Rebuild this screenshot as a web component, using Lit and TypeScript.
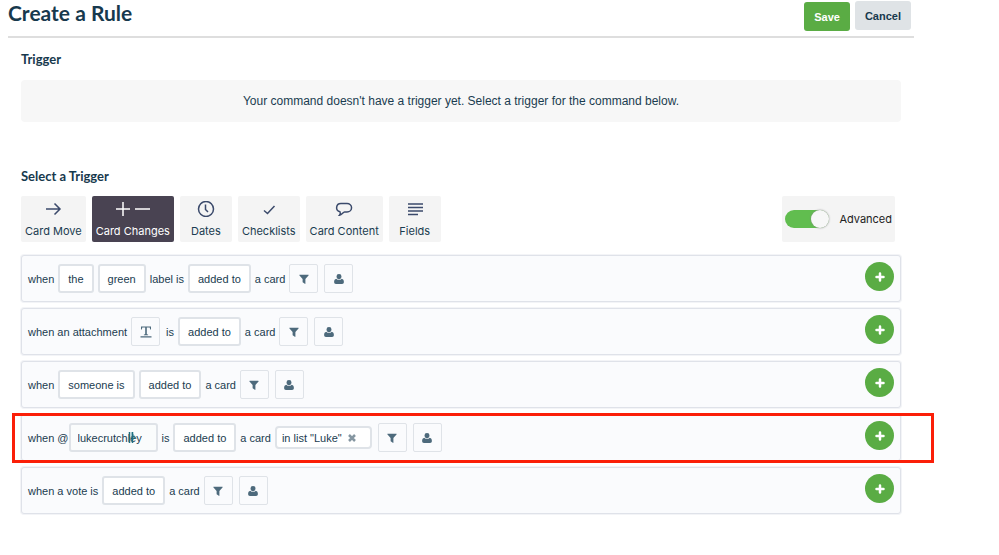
import { LitElement, html, svg, css, TemplateResult } from "lit";
import { customElement, state } from "lit/decorators.js";
import { classMap } from "lit/directives/class-map.js";

const tabIcons: Record<string, TemplateResult> = {
  move: svg`<path d="M2 8h14M10.500 2.500 16 8l-5.500 5.500"/>`,
  changes: svg`<path d="M1 8h14M8 1v14M20 8h15"/>`,
  dates: svg`<circle cx="9" cy="8" r="7.500"/><path d="M8.500 3.500v5l2.500 2.500"/>`,
  check: svg`<path d="M4 9.500 7.500 12.500 14.500 5"/>`,
  content: svg`<path d="M6 2.500h6a4.500 4.200 0 0 1 0 8.500h-2.500c-1.500 0-2.500 3-5 3.200.8-1 1-2.500.5-3.400a4.300 4.200 0 0 1 1-8.300z"/>`,
  fields: svg`<path d="M2 3h15M2 6.500h15M2 10h15M2 13.500h10"/>`,
};

const tabs = [
  { id: "move", label: "Card Move" },
  { id: "changes", label: "Card Changes" },
  { id: "dates", label: "Dates" },
  { id: "check", label: "Checklists" },
  { id: "content", label: "Card Content" },
  { id: "fields", label: "Fields" },
];

const filterIcon = html`<svg class="glyph" width="10" height="10" viewBox="0 0 10 10" aria-hidden="true">
  <path d="M.8.800h8.400c.5 0 .6.500.3.800L6.400 4.900v4.600c0 .4-.3.500-.6.300L4 8.400c-.3-.2-.4-.4-.4-.7V4.900L.5 1.600C.2 1.300.3.800.8.800z"/></svg>`;
const userIcon = html`<svg class="glyph" width="10" height="10" viewBox="0 0 10 10" aria-hidden="true">
  <path d="M5 0a2.500 2.500 0 0 1 2.500 2.600C7.500 4.200 6.400 5.400 5 5.400S2.500 4.200 2.500 2.600A2.500 2.500 0 0 1 5 0z"/>
  <path d="M2.300 4.800C3 5.600 4 6 5 6s2-.4 2.700-1.200C9.200 5.100 9.900 6.400 9.900 8c0 1.200-.7 2-1.800 2H1.900C.8 10 .1 9.200.1 8c0-1.600.7-2.900 2.200-3.200z"/></svg>`;
const textIcon = html`<svg class="glyph" width="12" height="12" viewBox="0 0 12 12" aria-hidden="true">
  <path d="M1 .5h10v3h-.8L9.700 1.600H6.800v6.600l1.300.3v.7H3.900v-.7l1.300-.3V1.600H2.300L1.800 3.500H1zM.5 10.200h11v1.200H.5z"/></svg>`;

type Part =
  | { kind: "text"; value: string }
  | { kind: "choice"; value: string }
  | { kind: "icon"; value: "filter" | "user" | "text" }
  | { kind: "input"; label: string; value: string }
  | { kind: "tag"; value: string };

const text = (value: string): Part => ({ kind: "text", value });
const choice = (value: string): Part => ({ kind: "choice", value });
const icon = (value: "filter" | "user" | "text"): Part => ({ kind: "icon", value });

const rules: { parts: Part[]; marked?: boolean }[] = [
  { parts: [text("when"), choice("the"), choice("green"), text("label is"), choice("added to"), text("a card"), icon("filter"), icon("user")] },
  { parts: [text("when an attachment"), icon("text"), text("is"), choice("added to"), text("a card"), icon("filter"), icon("user")] },
  { parts: [text("when"), choice("someone is"), choice("added to"), text("a card"), icon("filter"), icon("user")] },
  {
    marked: true,
    parts: [{ kind: "input", label: "when @", value: "lukecrutchley" }, text("is"), choice("added to"), text("a card"), { kind: "tag", value: 'in list "Luke"' }, icon("filter"), icon("user")],
  },
  { parts: [text("when a vote is"), choice("added to"), text("a card"), icon("filter"), icon("user")] },
];

@customElement("rule-row")
class RuleRow extends LitElement {
  static properties = { parts: { attribute: false } };
  declare parts: Part[];

  static styles = css`
    :host {
      display: flex;
      align-items: center;
      box-sizing: border-box;
      min-height: 47px;
      padding: 0 6px;
      border: 1px solid #dfe2e9;
      border-radius: 3px;
      background: #fafbfd;
      box-shadow: 0 0 0 1px #f3f4f7;
      font-size: 11px;
    }
    .sentence {
      flex: 1;
      display: flex;
      flex-wrap: wrap;
      align-items: center;
      gap: 4px;
    }
    button, input {
      box-sizing: border-box;
      margin: 0;
      font: inherit;
      color: inherit;
    }
    .choice, .handle {
      height: 29px;
      padding: 0 8px;
      border: 2px solid #dfe3e8;
      border-radius: 3px;
      background: #fff;
    }
    .handle {
      width: 89px;
      padding: 0 7px;
      background: #fafcfc;
    }
    .field {
      display: flex;
      align-items: center;
    }
    .box {
      position: relative;
      display: flex;
    }
    .caret {
      position: absolute;
      left: 59px;
      top: 8px;
    }
    .icon {
      display: grid;
      place-items: center;
      width: 29px;
      height: 29px;
      margin-right: 2px;
      padding: 0;
      border: 1px solid #dfe3e8;
      border-radius: 2px;
      background: #fafbfd;
    }
    .glyph { fill: #4d6a7c; }
    .tag {
      display: flex;
      align-items: center;
      gap: 6px;
      box-sizing: border-box;
      height: 23px;
      margin-right: 2px;
      padding: 0 14px 0 5px;
      border: 2px solid #dfe3e8;
      border-radius: 4px;
      background: #fff;
    }
    .remove {
      display: grid;
      padding: 0;
      border: 0;
      background: none;
    }
    .remove svg { stroke: #8596a1; stroke-width: 2.500; }
    .add {
      display: grid;
      place-items: center;
      width: 29px;
      height: 29px;
      margin-bottom: 4px;
      padding: 0;
      border: 0;
      border-radius: 50%;
      background: #5aac44;
    }
    .add svg { stroke: #fff; stroke-width: 2.500; stroke-linecap: round; }
  `;

  renderPart(part: Part) {
    switch (part.kind) {
      case "choice":
        return html`<button class="choice">${part.value}</button>`;
      case "input":
        return html`<label class="field">${part.label}<span class="box">
          <input class="handle" .value=${part.value} />
          <svg class="caret" width="11" height="13" viewBox="0 0 11 13" aria-hidden="true">
            <path d="M1.500 1v11M4.500 1v11" stroke="#1d6f80" stroke-width="1.500" />
            <path d="M3.500 1 9 7.500 6 8l-2.500 3z" fill="#1d6f80" fill-opacity=".55" />
          </svg>
        </span></label>`;
      case "tag":
        return html`<span class="tag">${part.value}
          <button class="remove" aria-label="Remove list filter">
            <svg width="8" height="8" viewBox="0 0 8 8" aria-hidden="true"><path d="M1 1l6 6M7 1 1 7" /></svg>
          </button></span>`;
      case "icon": {
        const glyph = { filter: filterIcon, user: userIcon, text: textIcon }[part.value];
        const label = { filter: "Filter cards", user: "Filter members", text: "Attachment name" }[part.value];
        return html`<button class="icon" aria-label=${label}>${glyph}</button>`;
      }
      default:
        return html`<span>${part.value}</span>`;
    }
  }

  render() {
    return html`
      <div class="sentence">${this.parts.map((p) => this.renderPart(p))}</div>
      <button class="add" aria-label="Add trigger">
        <svg width="10" height="10" viewBox="0 0 10 10" aria-hidden="true"><path d="M5 1.500v7M1.500 5h7" /></svg>
      </button>
    `;
  }
}

@customElement("app-root")
class AppRoot extends LitElement {
  @state() private active = "changes";

  static styles = css`
    :host {
      display: block;
      min-height: 100vh;
      padding: 0 85px 0 8px;
      box-sizing: border-box;
      background: #fff;
      color: #1a3c50;
      font: 12px/16px "Liberation Sans", Arial, sans-serif;
    }
    button { margin: 0; font: inherit; color: inherit; }
    header {
      display: flex;
      align-items: flex-start;
      gap: 5px;
      padding: 1px 3px 5px 0;
      border-bottom: 2px solid #dedede;
    }
    h1, h2 { margin: 0; font-family: Lato, sans-serif; font-weight: 700; color: #17394d; }
    h1 { flex: 1; font-size: 21px; line-height: 24px; }
    h2 { font-size: 13px; line-height: 18px; }
    .action {
      height: 29px;
      padding: 0 10px;
      border: 0;
      border-radius: 3px;
      background: #dfe3e6;
      font-size: 11px;
      font-weight: 700;
      color: #17394d;
    }
    .primary { margin-top: 1px; background: #5aac44; color: #fff; }
    main { padding: 12px 13px 0; }
    .notice {
      margin: 12px 0 45px;
      padding: 13px;
      border-radius: 4px;
      background: #f7f7f7;
      text-align: center;
    }
    .toolbar {
      display: flex;
      flex-wrap: wrap;
      gap: 6px;
      margin: 11px 0 13px;
    }
    .tab {
      display: flex;
      flex-direction: column;
      align-items: center;
      gap: 6px;
      min-width: 52px;
      height: 46px;
      padding: 5px 4px 0;
      border: 0;
      border-radius: 2px;
      background: #f4f4f4;
      font: 11px/16px Inter, sans-serif;
    }
    .tab svg { fill: none; stroke: #3b4a6b; stroke-width: 1.500; }
    .active { background: #494352; color: #fff; }
    .active svg { stroke: #fff; }
    .advanced {
      display: flex;
      align-items: center;
      gap: 10px;
      box-sizing: border-box;
      height: 46px;
      margin: 0 6px 0 auto;
      padding: 0 3px;
      border-radius: 2px;
      background: #f4f4f4;
      color: #222;
      font: 11px/16px Inter, sans-serif;
    }
    .switch {
      appearance: none;
      display: flex;
      justify-content: flex-end;
      width: 44px;
      height: 18px;
      margin: 0;
      border-radius: 9px;
      background: #61bd4f;
    }
    .switch::before {
      content: "";
      width: 18px;
      height: 18px;
      border-radius: 50%;
      background: #f7f7f7;
      box-shadow: 0 0 2px #888;
    }
    .switch:not(:checked) { justify-content: flex-start; background: #bbb; }
    .rules {
      display: grid;
      gap: 6px;
      margin: 0;
      padding: 0;
      list-style: none;
    }
    .marked { position: relative; }
    .marked::after {
      content: "";
      position: absolute;
      inset: -1px -33px -2px -9px;
      border: 3px solid #fb1f08;
      pointer-events: none;
    }
  `;

  render() {
    return html`
      <header>
        <h1>Create a Rule</h1>
        <button class="action primary">Save</button>
        <button class="action">Cancel</button>
      </header>
      <main>
        <h2>Trigger</h2>
        <div class="notice">Your command doesn't have a trigger yet. Select a trigger for the command below.</div>
        <h2>Select a Trigger</h2>
        <div class="toolbar">
          ${tabs.map(
            (t) => html`<button
              class=${classMap({ tab: true, active: t.id === this.active })}
              aria-pressed=${t.id === this.active}
              @click=${() => (this.active = t.id)}
            >
              <svg width=${t.id === "changes" ? 36 : 18} height="16" aria-hidden="true">${tabIcons[t.id]}</svg>
              ${t.label}
            </button>`
          )}
          <label class="advanced"><input class="switch" type="checkbox" role="switch" checked />Advanced</label>
        </div>
        <ul class="rules">
          ${rules.map((r) => html`<li class=${classMap({ marked: !!r.marked })}><rule-row .parts=${r.parts}></rule-row></li>`)}
        </ul>
      </main>
    `;
  }
}
